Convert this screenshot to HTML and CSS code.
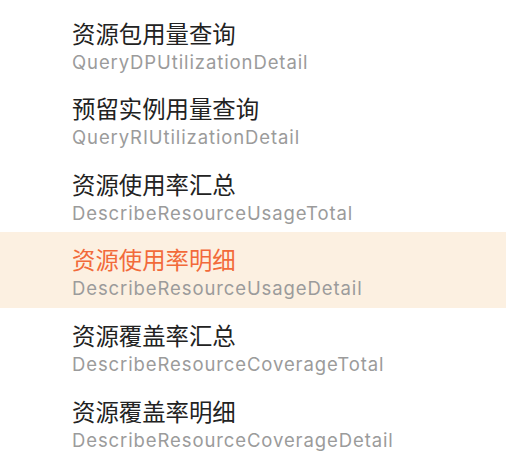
FILE: index.html
```html
<!DOCTYPE html>
<html lang="zh-CN">
<head>
  <meta charset="UTF-8">
  <meta name="viewport" content="width=device-width, initial-scale=1.0">
  <title>Billing APIs</title>
  <link rel="stylesheet" href="styles.css">
</head>
<body>
  <ul class="api-list">
    <li class="api-item">
      <span class="api-name">资源包用量查询</span>
      <span class="api-action">QueryDPUtilizationDetail</span>
    </li>
    <li class="api-item">
      <span class="api-name">预留实例用量查询</span>
      <span class="api-action">QueryRIUtilizationDetail</span>
    </li>
    <li class="api-item">
      <span class="api-name">资源使用率汇总</span>
      <span class="api-action">DescribeResourceUsageTotal</span>
    </li>
    <li class="api-item active">
      <span class="api-name">资源使用率明细</span>
      <span class="api-action">DescribeResourceUsageDetail</span>
    </li>
    <li class="api-item">
      <span class="api-name">资源覆盖率汇总</span>
      <span class="api-action">DescribeResourceCoverageTotal</span>
    </li>
    <li class="api-item">
      <span class="api-name">资源覆盖率明细</span>
      <span class="api-action">DescribeResourceCoverageDetail</span>
    </li>
  </ul>
</body>
</html>
```

FILE: styles.css
```css
:root {
  --text: #222222;
  --muted: #9b9b9b;
  --accent: #f26a3a;
  --active-bg: #fcf0e1;
}

body {
  margin: 0;
  background-color: #ffffff;
  font-family: Inter, "Noto Sans CJK SC", sans-serif;
}

/* API list */
.api-list {
  list-style: none;
  margin: 0;
  padding: 5.6px 0 0;
}

.api-item {
  height: 75.6px;
  box-sizing: border-box;
  padding: 12px 0 0 72px;
  display: flex;
  flex-direction: column;
}

.api-name {
  font-family: "Noto Sans CJK SC", sans-serif;
  font-size: 23.4px;
  line-height: 30px;
  color: var(--text);
}

.api-action {
  margin-top: 2px;
  font-size: 18.5px;
  line-height: 24px;
  letter-spacing: 0.9px;
  color: var(--muted);
}

.api-item.active {
  background-color: var(--active-bg);
}

.api-item.active .api-name {
  color: var(--accent);
}
```
